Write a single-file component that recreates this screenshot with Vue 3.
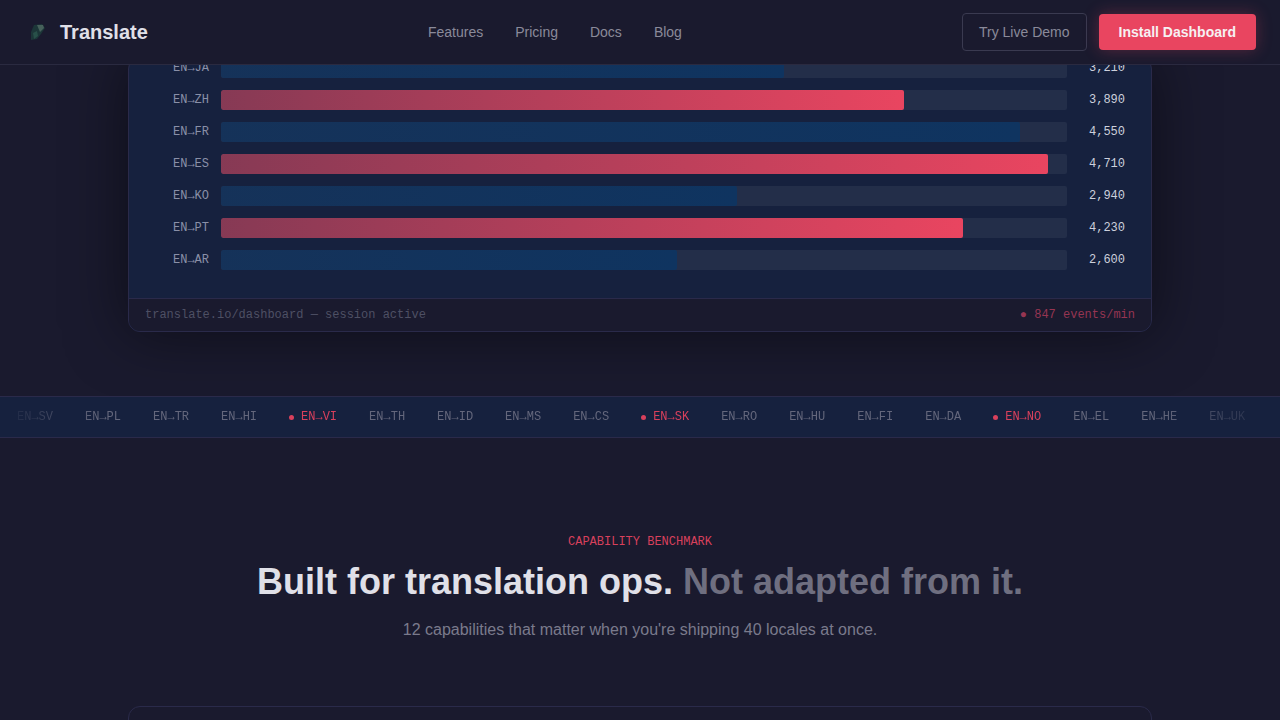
<script setup>
const maxEvents = 4820

const rows = [
  { pair: 'EN→JA', count: 3210, hot: false },
  { pair: 'EN→ZH', count: 3890, hot: true },
  { pair: 'EN→FR', count: 4550, hot: false },
  { pair: 'EN→ES', count: 4710, hot: true },
  { pair: 'EN→KO', count: 2940, hot: false },
  { pair: 'EN→PT', count: 4230, hot: true },
  { pair: 'EN→AR', count: 2600, hot: false }
]

const ticker = [
  'SV', 'PL', 'TR', 'HI', 'VI', 'TH', 'ID', 'MS', 'CS',
  'SK', 'RO', 'HU', 'FI', 'DA', 'NO', 'EL', 'HE', 'UK'
]
const hotTicker = ['VI', 'SK', 'NO']
</script>

<template>
  <div class="page">
    <nav class="nav">
      <div class="brand">
        <svg class="brand-icon" width="20" height="20" viewBox="0 0 20 20">
          <path d="M6 3 L14 2 L17 6 L13 12 L9 17 L3 18 L3 10 Z" fill="#1c3638" />
          <path d="M9 3 L15 3 L16 6 L12 10 Z" fill="#46605a" />
          <path d="M5 11 L9 9 L10 14 L6 17 Z" fill="#285049" />
        </svg>
        <span class="brand-name">Translate</span>
      </div>
      <div class="links">
        <a>Features</a>
        <a>Pricing</a>
        <a>Docs</a>
        <a>Blog</a>
      </div>
      <div class="actions">
        <button class="btn-ghost">Try Live Demo</button>
        <button class="btn-primary">Install Dashboard</button>
      </div>
    </nav>

    <section class="hero">
      <div class="panel">
        <div class="chart">
          <div v-for="row in rows" :key="row.pair" class="row">
            <span class="pair">{{ row.pair }}</span>
            <div class="track">
              <div
                class="fill"
                :class="{ hot: row.hot }"
                :style="{ width: (row.count / maxEvents) * 100 + '%' }"
              ></div>
            </div>
            <span class="count">{{ row.count.toLocaleString('en-US') }}</span>
          </div>
        </div>
        <div class="panel-foot">
          <span>translate.io/dashboard — session active</span>
          <span class="live">● 847 events/min</span>
        </div>
      </div>
    </section>

    <div class="ticker">
      <div class="ticker-track">
        <span
          v-for="code in ticker"
          :key="code"
          class="tick"
          :class="{ hot: hotTicker.includes(code) }"
        >EN→{{ code }}</span>
      </div>
    </div>

    <section class="bench">
      <div class="eyebrow">CAPABILITY BENCHMARK</div>
      <h2>Built for translation ops. <span>Not adapted from it.</span></h2>
      <p>12 capabilities that matter when you're shipping 40 locales at once.</p>
      <div class="table-card"></div>
    </section>
  </div>
</template>

<style>
html, body {
  margin: 0;
  background: #1a1a2e;
}
</style>

<style scoped>
.page {
  height: 720px;
  overflow: hidden;
  background: #1a1a2e;
  font-family: "Liberation Sans", Arial, sans-serif;
  color: #e0e0e8;
}

.nav {
  position: relative;
  z-index: 2;
  height: 64px;
  display: flex;
  align-items: center;
  justify-content: space-between;
  padding: 0 24px 0 28px;
  background: #1a1a2e;
  border-bottom: 1px solid #2a2a40;
}

.brand {
  display: flex;
  align-items: center;
  gap: 12px;
}

.brand-name {
  font-size: 20px;
  font-weight: 700;
  color: #e0e0e8;
}

.links {
  display: flex;
  gap: 32px;
  font-size: 14px;
  color: #8a8a9a;
}

.actions {
  display: flex;
  align-items: center;
  gap: 12px;
}

.btn-ghost,
.btn-primary {
  font-family: inherit;
  font-size: 14px;
  border-radius: 4px;
}

.btn-ghost {
  height: 38px;
  padding: 0 16px;
  background: transparent;
  color: #8a8a9a;
  border: 1px solid #3a3a50;
}

.btn-primary {
  height: 36px;
  padding: 0 20px;
  border: none;
  background: #e94560;
  color: #f6f0f2;
  font-weight: 700;
  box-shadow: 0 0 16px rgba(233, 69, 96, 0.3);
}

.hero {
  height: 267px;
  padding-bottom: 64px;
  display: flex;
  flex-direction: column;
  justify-content: flex-end;
  overflow: hidden;
  background: #1a1a2e;
}

.panel {
  flex-shrink: 0;
  width: 1024px;
  box-sizing: border-box;
  margin: 0 auto;
  background: #16213e;
  border: 1px solid #2a2a4a;
  border-radius: 12px;
  box-shadow: 0 0 60px rgba(0, 0, 0, 0.5);
  overflow: hidden;
}

.chart {
  display: flex;
  flex-direction: column;
  gap: 12px;
  padding: 0 26px 28px 44px;
}

.row {
  display: grid;
  grid-template-columns: 36px 846px 46px;
  column-gap: 12px;
  align-items: center;
  height: 20px;
  font-family: "Liberation Mono", monospace;
  font-size: 12px;
}

.pair {
  color: #8a90a8;
  white-space: nowrap;
}

.track {
  height: 20px;
  background: rgba(255, 255, 255, 0.06);
  border-radius: 2px;
  overflow: hidden;
}

.fill {
  height: 100%;
  background: linear-gradient(90deg, rgba(15, 52, 96, 0.7), #0f3460);
  border-radius: 2px;
}

.fill.hot {
  background: linear-gradient(90deg, rgba(233, 69, 96, 0.5), #e94560);
}

.count {
  color: #ccd0dc;
  text-align: right;
}

.panel-foot {
  display: flex;
  justify-content: space-between;
  align-items: center;
  height: 32px;
  padding: 0 16px;
  background: #1a1a2e;
  border-top: 1px solid #2a2a4a;
  font-family: "Liberation Mono", monospace;
  font-size: 12px;
  color: #4e5064;
}

.live {
  color: #963552;
}

.ticker {
  height: 40px;
  background: #16213e;
  border-top: 1px solid #2a2a4a;
  border-bottom: 1px solid #2a2a4a;
  overflow: hidden;
}

.ticker-track {
  display: flex;
  gap: 32px;
  height: 100%;
  align-items: center;
  padding-left: 17px;
  font-family: "Liberation Mono", monospace;
  font-size: 12px;
  color: #64677c;
  white-space: nowrap;
  -webkit-mask-image: linear-gradient(90deg, transparent, #000 100px, #000 calc(100% - 120px), transparent);
  mask-image: linear-gradient(90deg, transparent, #000 100px, #000 calc(100% - 120px), transparent);
}

.tick {
  display: flex;
  align-items: center;
}

.tick.hot {
  color: #d8405c;
}

.tick.hot::before {
  content: "";
  width: 5px;
  height: 5px;
  margin-right: 7px;
  border-radius: 50%;
  background: #d8405c;
}

.bench {
  padding-top: 97px;
  text-align: center;
}

.eyebrow {
  font-family: "Liberation Mono", monospace;
  font-size: 12px;
  color: #d8405c;
  line-height: 14px;
}

h2 {
  margin: 11px 0 0;
  font-size: 36px;
  line-height: 44px;
  font-weight: 700;
  color: #e0e0e8;
}

h2 span {
  color: #6f6f80;
}

p {
  margin: 14px 0 0;
  font-size: 16px;
  line-height: 24px;
  color: #7a7a8c;
}

.table-card {
  width: 1024px;
  height: 200px;
  box-sizing: border-box;
  margin: 64px auto 0;
  border: 1px solid #2a2a4a;
  border-radius: 12px;
}
</style>
